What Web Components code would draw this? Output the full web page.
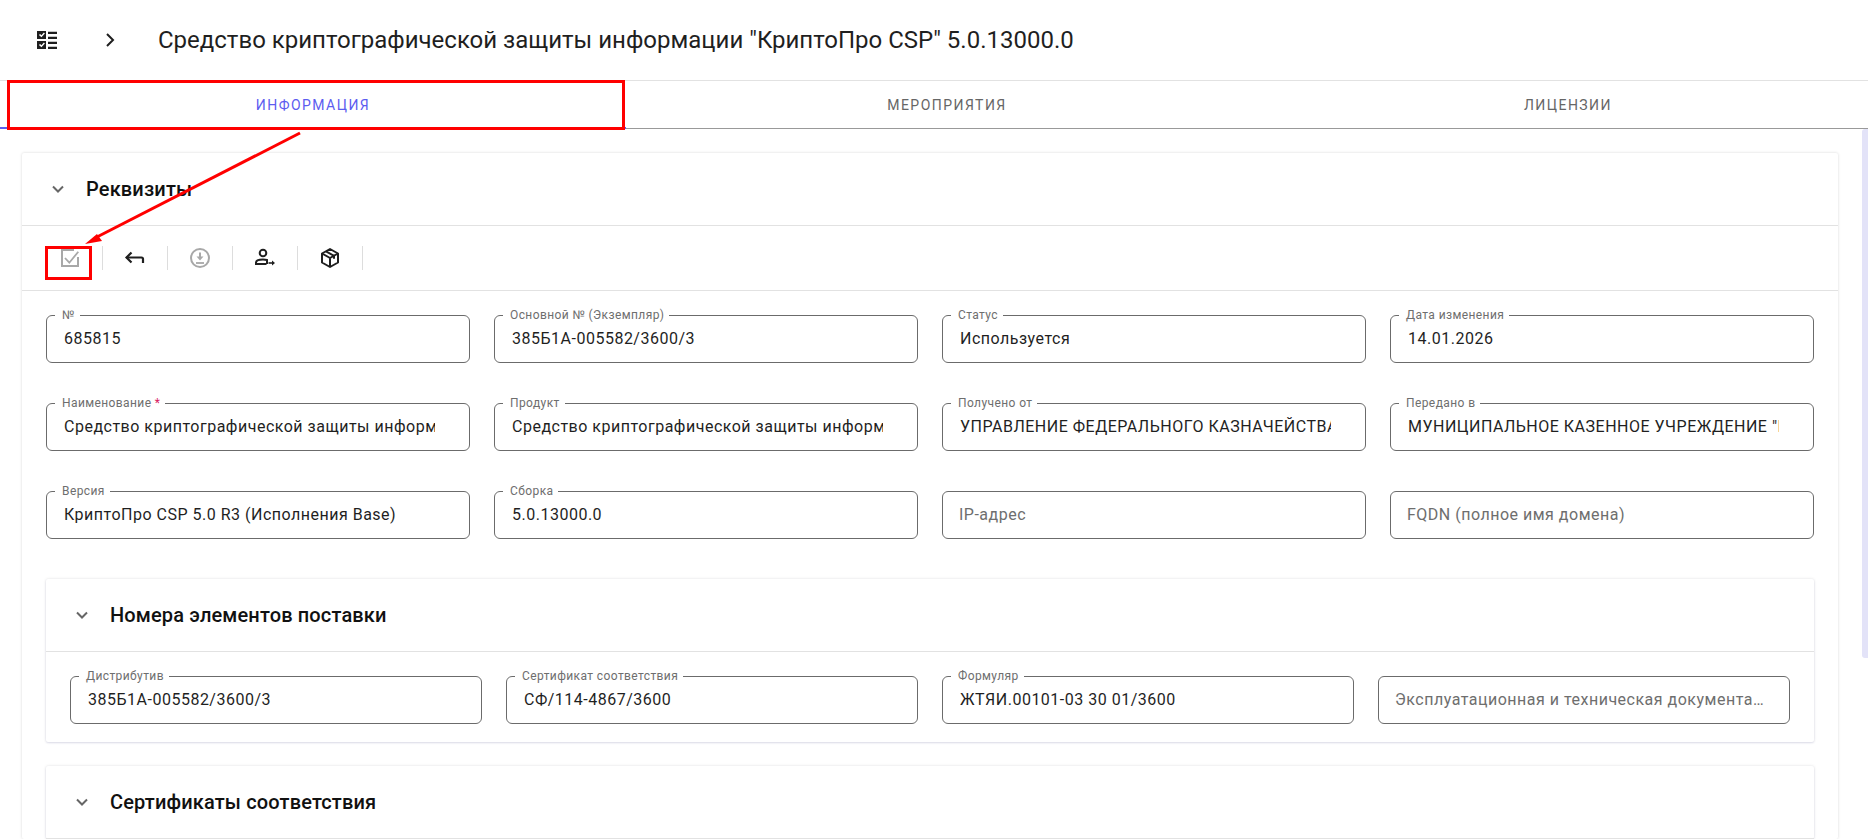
<!DOCTYPE html>
<html lang="ru">
<head>
<meta charset="utf-8">
<title>КриптоПро CSP</title>
<style>
  html, body { margin: 0; height: 100%; overflow: hidden; background: #fff; }
  body { font-family: Roboto, "Liberation Sans", sans-serif; color: #1f1f1f; }
</style>
</head>
<body>
<app-page>
  <app-header slot="header" title-text='Средство криптографической защиты информации "КриптоПро CSP" 5.0.13000.0'></app-header>
  <app-tabs slot="tabs" items="Информация|Мероприятия|Лицензии"></app-tabs>

  <app-card title-text="Реквизиты">
    <app-toolbar></app-toolbar>
    <field-grid flush>
      <text-field label="№" value="685815"></text-field>
      <text-field label="Основной № (Экземпляр)" value="385Б1А-005582/3600/3"></text-field>
      <text-field label="Статус" value="Используется"></text-field>
      <text-field label="Дата изменения" value="14.01.2026"></text-field>
      <text-field label="Наименование" required value='Средство криптографической защиты информации "КриптоПро CSP" 5.0.13000.0'></text-field>
      <text-field label="Продукт" value='Средство криптографической защиты информации "КриптоПро CSP"'></text-field>
      <text-field label="Получено от" value="УПРАВЛЕНИЕ ФЕДЕРАЛЬНОГО КАЗНАЧЕЙСТВА ПО ТЕРРИТОРИИ"></text-field>
      <text-field label="Передано в" value='МУНИЦИПАЛЬНОЕ КАЗЕННОЕ УЧРЕЖДЕНИЕ "ЦЕНТР"'></text-field>
      <text-field label="Версия" value="КриптоПро CSP 5.0 R3 (Исполнения Base)"></text-field>
      <text-field label="Сборка" value="5.0.13000.0"></text-field>
      <text-field placeholder="IP-адрес"></text-field>
      <text-field placeholder="FQDN (полное имя домена)"></text-field>
    </field-grid>

    <div style="padding: 40px 24px 0; display: flex; flex-direction: column; gap: 24px;">
      <app-card nested title-text="Номера элементов поставки">
        <field-grid>
          <text-field label="Дистрибутив" value="385Б1А-005582/3600/3"></text-field>
          <text-field label="Сертификат соответствия" value="СФ/114-4867/3600"></text-field>
          <text-field label="Формуляр" value="ЖТЯИ.00101-03 30 01/3600"></text-field>
          <text-field placeholder="Эксплуатационная и техническая документация"></text-field>
        </field-grid>
      </app-card>
      <app-card nested title-text="Сертификаты соответствия"></app-card>
    </div>
  </app-card>

  <red-marks slot="overlay"></red-marks>
</app-page>

<script>
class AppPage extends HTMLElement {
  constructor() {
    super();
    this.attachShadow({ mode: 'open' });
    this.shadowRoot.innerHTML = `
      <style>
        :host { display: block; position: relative; height: 839px; overflow: hidden; }
        .body { position: relative; height: 710px; overflow: hidden; }
        .content { padding: 24px 30px 0 22px; }
        .thumb {
          position: absolute; top: 0; right: 0; width: 6px; height: 529px;
          background: #e3e3f8; border-radius: 3px 0 0 3px;
        }
      </style>
      <slot name="header"></slot>
      <slot name="tabs"></slot>
      <div class="body">
        <div class="content"><slot></slot></div>
        <div class="thumb"></div>
      </div>
      <slot name="overlay"></slot>
    `;
  }
}

class AppHeader extends HTMLElement {
  constructor() {
    super();
    this.attachShadow({ mode: 'open' });
  }

  connectedCallback() {
    const titleText = this.getAttribute('title-text') || '';
    this.shadowRoot.innerHTML = `
      <style>
        :host {
          display: flex; align-items: center; box-sizing: border-box;
          height: 81px; border-bottom: 1px solid #e2e2e2;
        }
        .list { width: 24px; height: 24px; margin-left: 35px; fill: #1f1f1f; }
        .chev { width: 24px; height: 24px; margin-left: 39px; }
        h1 {
          margin: 0 0 0 36px; font-size: 24px; font-weight: 400;
          letter-spacing: 0; color: #1f1f1f; white-space: nowrap;
        }
      </style>
      <svg class="list" viewBox="0 0 24 24">
        <path fill-rule="evenodd" d="M2 3h9v8H2zM3.900 7l1.200-1.100 1.300 1.300 2.500-2.600 1 1-3.500 3.600zM2 13h9v8H2zM3.900 17l1.200-1.100 1.300 1.300 2.500-2.600 1 1-3.500 3.600z"/>
        <path d="M13 4h9v2.200h-9zM13 9h9v2.200h-9zM13 14h9v2.200h-9zM13 19h9v2.200h-9z" transform="translate(0 -.2)"/>
      </svg>
      <svg class="chev" viewBox="0 0 24 24"><path d="M9 6l6 6-6 6" fill="none" stroke="#1f1f1f" stroke-width="2"/></svg>
      <h1>${titleText}</h1>
    `;
  }
}

class AppTabs extends HTMLElement {
  constructor() {
    super();
    this.attachShadow({ mode: 'open' });
  }

  connectedCallback() {
    const items = (this.getAttribute('items') || '').split('|');
    this.shadowRoot.innerHTML = `
      <style>
        :host {
          display: grid; grid-template-columns: 626fr 642fr 600fr;
          height: 48px; box-sizing: border-box; border-bottom: 1px solid #999;
        }
        div {
          display: flex; align-items: center; justify-content: center;
          font-size: 14px; font-weight: 400; letter-spacing: 1.45px;
          text-transform: uppercase; color: #666; position: relative;
        }
        div.active { color: #5c5cf0; }
        div.active::after {
          content: ''; position: absolute; left: 0; right: 0; bottom: -1px;
          height: 2px; background: #5c5cf0;
        }
      </style>
      ${items.map((t, i) => `<div class="${i === 0 ? 'active' : ''}">${t}</div>`).join('')}
    `;
  }
}

class AppCard extends HTMLElement {
  constructor() {
    super();
    this.attachShadow({ mode: 'open' });
  }

  connectedCallback() {
    const titleText = this.getAttribute('title-text') || '';
    this.shadowRoot.innerHTML = `
      <style>
        :host {
          display: block; background: #fff; border-radius: 2px;
          box-shadow: 0 0 3px rgba(0, 0, 0, .16);
        }
        :host([nested]) { box-shadow: 0 0 3px rgba(0, 0, 0, .12), 0 1px 2px rgba(60, 60, 160, .12); }
        header {
          display: flex; align-items: center; height: 73px; box-sizing: border-box;
          border-bottom: 1px solid #e2e2e2;
        }
        svg { width: 24px; height: 24px; margin-left: 24px; }
        h2 { margin: 0 0 0 16px; font-size: 20px; font-weight: 500; letter-spacing: .15px; color: #111; }
      </style>
      <header>
        <svg viewBox="0 0 24 24"><path d="M7 9.500l5 5 5-5" fill="none" stroke="#666" stroke-width="2"/></svg>
        <h2>${titleText}</h2>
      </header>
      <slot></slot>
    `;
  }
}

class AppToolbar extends HTMLElement {
  constructor() {
    super();
    this.attachShadow({ mode: 'open' });
    this.shadowRoot.innerHTML = `
      <style>
        :host {
          display: flex; align-items: center; height: 65px; box-sizing: border-box;
          padding-left: 16px; border-bottom: 1px solid #e2e2e2;
        }
        .btn {
          width: 64px; height: 24px; display: flex; align-items: center; justify-content: center;
          border-right: 1px solid #ddd;
        }
        svg { width: 24px; height: 24px; display: block; }
      </style>
      <div class="btn">
        <svg viewBox="0 0 24 24" fill="none" stroke="#a8a8a8" stroke-width="2">
          <path d="M20 11v9H4V4h12"/><path d="M7 12l4.300 4.700 9-11" stroke-width="1.800"/>
        </svg>
      </div>
      <div class="btn">
        <svg viewBox="0 0 24 24" fill="none" stroke="#1f1f1f" stroke-width="2.200">
          <path d="M8.500 6.500l-5 5 5 5"/><path d="M3.500 11.500h15a1.500 1.500 0 0 1 1.500 1.500v4"/>
        </svg>
      </div>
      <div class="btn">
        <svg viewBox="0 0 24 24" fill="none" stroke="#a8a8a8" stroke-width="2">
          <circle cx="12" cy="12" r="9"/>
          <path d="M8 17h8" stroke-width="1.800"/>
          <path d="M12 6.500v5"/>
          <path d="M8.500 10.500h7L12 14.500z" fill="#a8a8a8" stroke="none"/>
        </svg>
      </div>
      <div class="btn">
        <svg viewBox="0 0 24 24" fill="none" stroke="#1f1f1f" stroke-width="2">
          <circle cx="10" cy="7" r="3.300"/>
          <path d="M13.500 18H3v-1.500c0-1.500 2-3 7-3 1.500 0 3 .2 4 .5v4"/>
          <path d="M15.500 17h4" stroke-width="1.600"/>
          <path d="M19 14.500l3 2.500-3 2.500z" fill="#1f1f1f" stroke="none"/>
        </svg>
      </div>
      <div class="btn">
        <svg viewBox="0 0 24 24" fill="none" stroke="#1f1f1f" stroke-width="2" stroke-linejoin="round">
          <path d="M12 3l8 4.500v9L12 21l-8-4.500v-9z"/>
          <path d="M4 7.500l8 4.500 8-4.500M12 12v9M8 5.300l8 4.500v3"/>
        </svg>
      </div>
    `;
  }
}

class FieldGrid extends HTMLElement {
  constructor() {
    super();
    this.attachShadow({ mode: 'open' });
    this.shadowRoot.innerHTML = `
      <style>
        :host {
          display: grid; grid-template-columns: repeat(4, 1fr);
          column-gap: 24px; row-gap: 40px; padding: 24px 24px 18px;
        }
        :host([flush]) { padding-bottom: 0; }
      </style>
      <slot></slot>
    `;
  }
}

class TextField extends HTMLElement {
  constructor() {
    super();
    this.attachShadow({ mode: 'open' });
  }

  connectedCallback() {
    const label = this.getAttribute('label');
    const value = this.getAttribute('value');
    const placeholder = this.getAttribute('placeholder');
    const required = this.hasAttribute('required') ? '<i> *</i>' : '';
    this.shadowRoot.innerHTML = `
      <style>
        :host {
          display: block; position: relative; height: 48px; box-sizing: border-box;
          border: 1px solid #6b6b6b; border-radius: 6px; min-width: 0;
        }
        .label {
          position: absolute; top: -8px; left: 8px; padding: 0 5px 0 7px; background: #fff;
          font-size: 12px; line-height: 14px; letter-spacing: .4px; color: #6e6e6e; white-space: nowrap;
        }
        .label i { color: #d81b60; font-style: normal; }
        .text {
          height: 46px; line-height: 46px; margin: 0 34px 0 17px;
          overflow: hidden; white-space: nowrap;
          font-size: 16px; letter-spacing: .5px; color: #1f1f1f;
        }
        .text.ph { color: #6e6e6e; text-overflow: ellipsis; margin: 0 24px 0 16px; }
      </style>
      ${label ? `<div class="label">${label}${required}</div>` : ''}
      <div class="text ${value ? '' : 'ph'}">${value || placeholder || ''}</div>
    `;
  }
}

// red annotation drawn on top of the screenshot
class RedMarks extends HTMLElement {
  constructor() {
    super();
    this.attachShadow({ mode: 'open' });
    this.shadowRoot.innerHTML = `
      <style>
        :host { position: absolute; inset: 0; pointer-events: none; display: block; }
        svg { position: absolute; left: 0; top: 0; }
      </style>
      <svg width="1868" height="839" viewBox="0 0 1868 839" fill="none" stroke="#ff0000" stroke-width="3">
        <rect x="8.500" y="81.500" width="615" height="47"/>
        <rect x="46.500" y="247.500" width="44" height="31"/>
        <path d="M300 133L95 238"/>
        <path d="M85 244L97 234L102 241z" fill="#ff0000" stroke="none"/>
      </svg>
    `;
  }
}

customElements.define('app-page', AppPage);
customElements.define('app-header', AppHeader);
customElements.define('app-tabs', AppTabs);
customElements.define('app-card', AppCard);
customElements.define('app-toolbar', AppToolbar);
customElements.define('field-grid', FieldGrid);
customElements.define('text-field', TextField);
customElements.define('red-marks', RedMarks);
</script>
</body>
</html>
